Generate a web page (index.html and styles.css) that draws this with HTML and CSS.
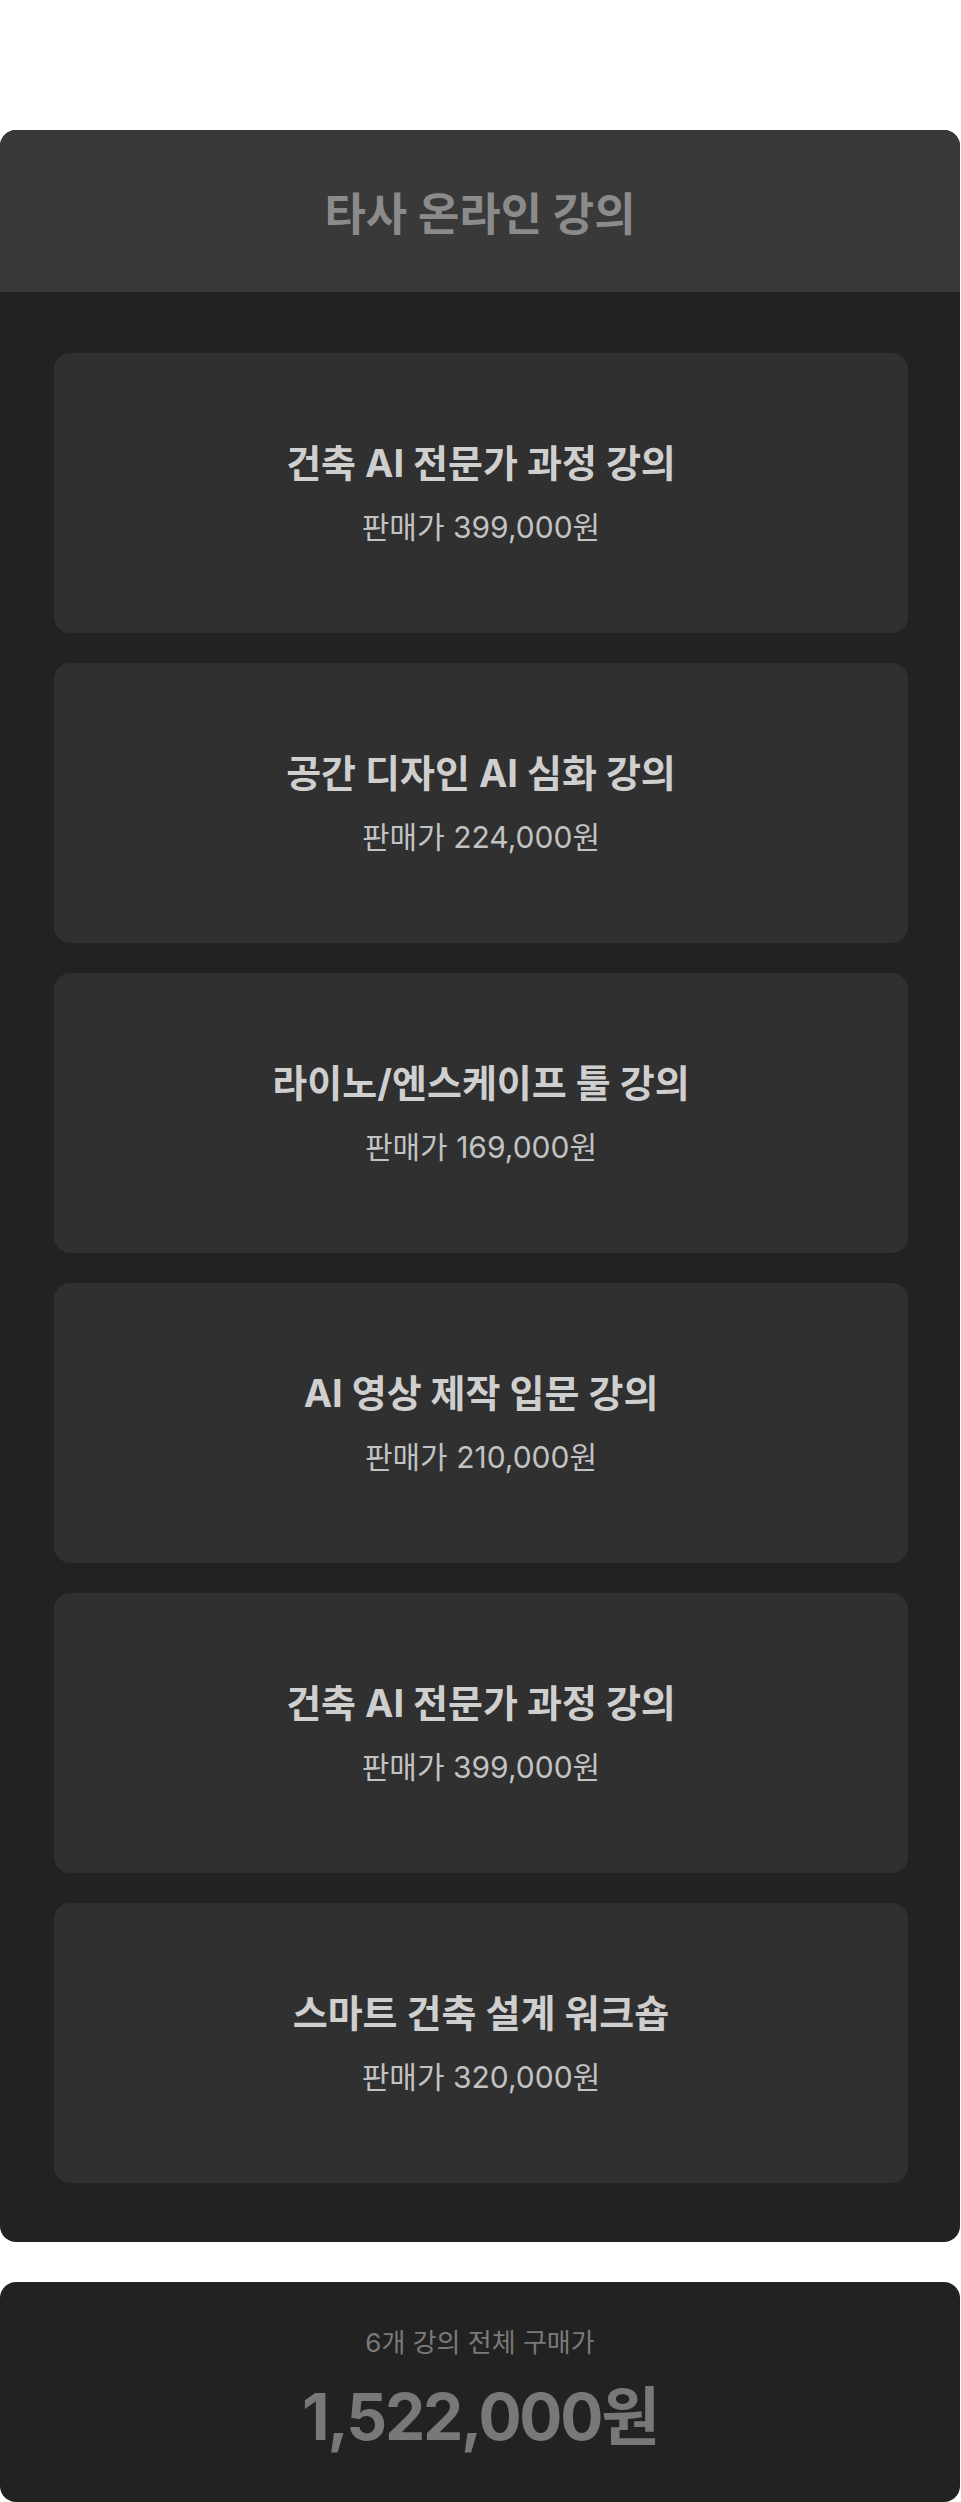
FILE: index.html
```html
<!DOCTYPE html>
<html lang="ko">
<head>
<meta charset="utf-8">
<title>타사 온라인 강의</title>
<link rel="stylesheet" href="styles.css">
</head>
<body>
<main class="page">
  <section class="panel">
    <header class="panel-head">
      <h2 class="panel-title">타사 온라인 강의</h2>
    </header>
    <div class="course-list">
      <div class="course-card">
        <p class="course-name">건축 AI 전문가 과정 강의</p>
        <p class="course-price">판매가 399,000원</p>
      </div>
      <div class="course-card">
        <p class="course-name">공간 디자인 AI 심화 강의</p>
        <p class="course-price">판매가 224,000원</p>
      </div>
      <div class="course-card">
        <p class="course-name">라이노/엔스케이프 툴 강의</p>
        <p class="course-price">판매가 169,000원</p>
      </div>
      <div class="course-card">
        <p class="course-name">AI 영상 제작 입문 강의</p>
        <p class="course-price">판매가 210,000원</p>
      </div>
      <div class="course-card">
        <p class="course-name">건축 AI 전문가 과정 강의</p>
        <p class="course-price">판매가 399,000원</p>
      </div>
      <div class="course-card">
        <p class="course-name">스마트 건축 설계 워크숍</p>
        <p class="course-price">판매가 320,000원</p>
      </div>
    </div>
  </section>
  <section class="summary">
    <p class="summary-label">6개 강의 전체 구매가</p>
    <p class="summary-total">1,522,000원</p>
  </section>
</main>
</body>
</html>
```

FILE: styles.css
```css
* { box-sizing: border-box; }

html, body {
  margin: 0;
  padding: 0;
  background: #ffffff;
}

body {
  font-family: "Inter", "Noto Sans CJK KR", "Noto Sans", sans-serif;
}

.page {
  width: 960px;
  padding-top: 130px;
}

.panel {
  background: #222222;
  border-radius: 16px;
  overflow: hidden;
}

.panel-head {
  height: 162px;
  background: #393939;
  display: flex;
  align-items: center;
  justify-content: center;
}

.panel-title {
  margin: 0;
  font-size: 45px;
  font-weight: 700;
  color: #8b8b8b;
}

.course-list {
  display: flex;
  flex-direction: column;
  gap: 30px;
  padding: 61px 52px 59px 54px;
}

.course-card {
  height: 280px;
  background: #303030;
  border-radius: 16px;
  display: flex;
  flex-direction: column;
  align-items: center;
  justify-content: center;
  gap: 19px;
}

.course-name {
  margin: 0;
  font-size: 38px;
  font-weight: 700;
  color: #cfcfcf;
  line-height: 1.3;
}

.course-price {
  margin: 0;
  font-size: 30px;
  font-weight: 400;
  color: #c2c2c2;
  line-height: 1.3;
}

.summary {
  margin-top: 40px;
  height: 220px;
  background: #222222;
  border-radius: 16px;
  display: flex;
  flex-direction: column;
  align-items: center;
  justify-content: center;
  gap: 20px;
  padding-bottom: 4px;
}

.summary-label {
  margin: 0;
  font-size: 26px;
  font-weight: 400;
  color: #7a7a7a;
  line-height: 1.3;
}

.summary-total {
  margin: 0;
  font-size: 64px;
  font-weight: 700;
  color: #787878;
  line-height: 1.15;
  letter-spacing: -2.2px;
}
```
